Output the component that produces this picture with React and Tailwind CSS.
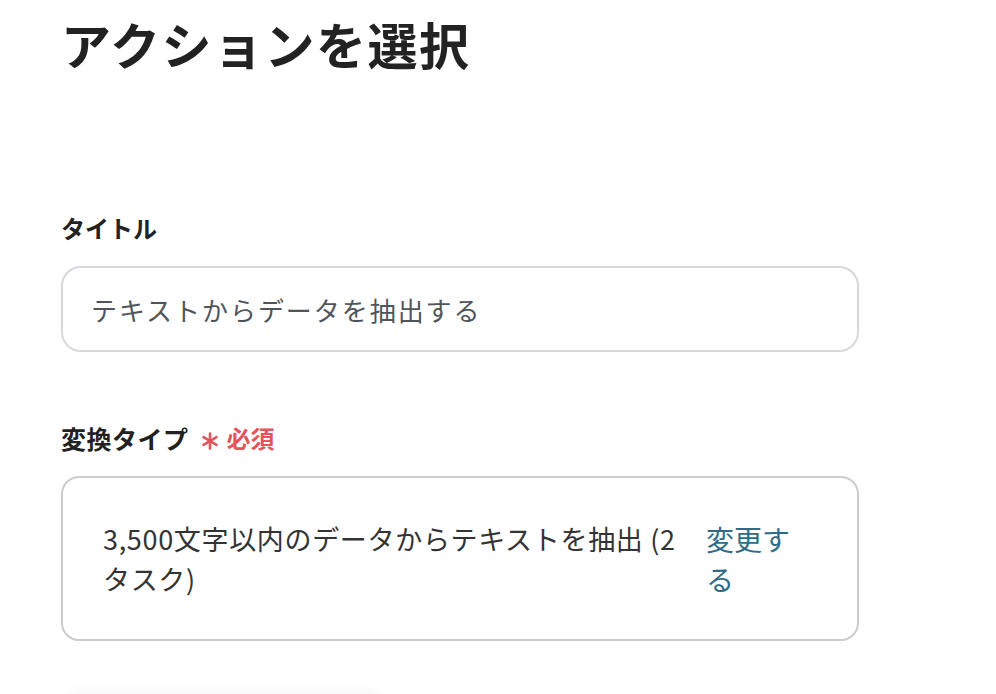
import React from 'react'

const font = { fontFamily: '"Noto Sans CJK JP", "Noto Sans", sans-serif' }

function Asterisk() {
  return (
    <svg width="18" height="18" viewBox="0 0 18 18" className="ml-[12px] mr-[8px] mt-[6px] shrink-0">
      <g stroke="#e5535b" strokeWidth="2.6" strokeLinecap="round">
        <line x1="9" y1="1.5" x2="9" y2="16.5" />
        <line x1="2.5" y1="5.2" x2="15.5" y2="12.8" />
        <line x1="2.5" y1="12.8" x2="15.5" y2="5.2" />
      </g>
    </svg>
  )
}

export default function App() {
  return (
    <div className="min-h-screen bg-white overflow-hidden" style={font}>
      <div className="pl-[61px] pt-[13px] w-[859px]">
        <h1 className="text-[50px] leading-[60px] font-bold text-[#222] tracking-[0.03em]">アクションを選択</h1>

        <div className="mt-[137px]">
          <label className="block text-[24px] leading-[36px] font-bold text-[#222]">タイトル</label>
          <div className="mt-[20px] h-[86px] rounded-[20px] border-2 border-[#d5d8dc] flex items-center px-[28px]">
            <span className="text-[26px] tracking-[0.075em] text-[#50555b]">テキストからデータを抽出する</span>
          </div>
        </div>

        <div className="mt-[68px]">
          <div className="flex items-center h-[36px]">
            <label className="text-[25px] leading-[36px] font-bold text-[#222] tracking-[0.02em]">変換タイプ</label>
            <Asterisk />
            <span className="text-[24px] leading-[36px] font-bold text-[#e5535b]">必須</span>
          </div>
          <div className="mt-[20px] h-[165px] rounded-[18px] border-2 border-[#cccccc] flex items-center pl-[40px] pr-[56px] gap-[20px]">
            <p className="flex-1 text-[27px] leading-[40px] text-[#333] tracking-[0.025em]">3,500文字以内のデータからテキストを抽出 (2タスク)</p>
            <a className="w-[95px] shrink-0 text-[28px] leading-[40px] text-[#2e6b87]">変更する</a>
          </div>
        </div>

        <div className="mt-[54px] ml-[2px] w-[320px] h-[48px] rounded-[16px] bg-white shadow-[0_-2px_14px_rgba(0,0,0,0.05)]" />
      </div>
    </div>
  )
}
